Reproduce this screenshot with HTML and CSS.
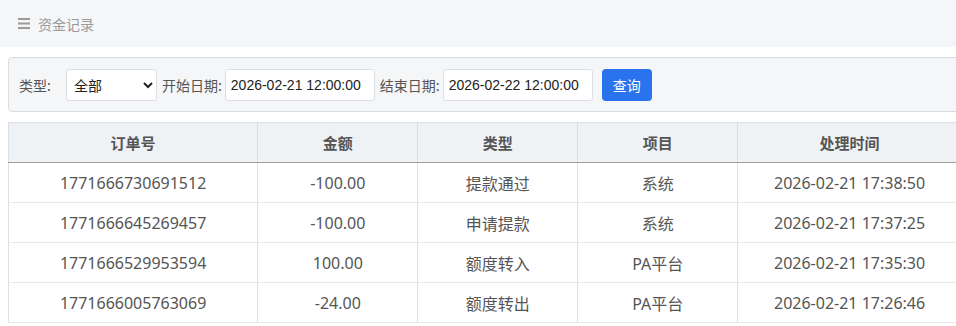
FILE: index.html
```html
<!DOCTYPE html>
<html lang="zh-CN">
<head>
    <meta charset="UTF-8">
    <meta name="viewport" content="width=device-width, initial-scale=1.0">
    <title>资金记录</title>
    <link rel="stylesheet" href="styles.css">
</head>
<body>

    <header class="topbar">
        <span class="menu-icon">
            <svg width="12" height="11" viewBox="0 0 12 11"><rect x="0" y="0" width="12" height="2" fill="#9a9a9a"/><rect x="0" y="4.5" width="12" height="2" fill="#9a9a9a"/><rect x="0" y="9" width="12" height="2" fill="#9a9a9a"/></svg>
        </span>
        <span class="title">资金记录</span>
    </header>

    <main class="content">
        <!-- 筛选条件 -->
        <div class="filter">
            <label for="type" class="label-type">类型:</label>
            <select id="type">
                <option value="">全部</option>
                <option value="1">提款通过</option>
                <option value="2">申请提款</option>
                <option value="3">额度转入</option>
                <option value="4">额度转出</option>
            </select>
            <label for="start">开始日期:</label>
            <input type="text" id="start" value="2026-02-21 12:00:00">
            <label for="end">结束日期:</label>
            <input type="text" id="end" value="2026-02-22 12:00:00">
            <button class="btn-query">查询</button>
        </div>

        <!-- 记录列表 -->
        <table class="records">
            <thead>
                <tr>
                    <th class="col-order">订单号</th>
                    <th class="col-mid">金额</th>
                    <th class="col-mid">类型</th>
                    <th class="col-mid">项目</th>
                    <th class="col-time">处理时间</th>
                </tr>
            </thead>
            <tbody>
                <tr>
                    <td>1771666730691512</td>
                    <td>-100.00</td>
                    <td>提款通过</td>
                    <td>系统</td>
                    <td>2026-02-21 17:38:50</td>
                </tr>
                <tr>
                    <td>1771666645269457</td>
                    <td>-100.00</td>
                    <td>申请提款</td>
                    <td>系统</td>
                    <td>2026-02-21 17:37:25</td>
                </tr>
                <tr>
                    <td>1771666529953594</td>
                    <td>100.00</td>
                    <td>额度转入</td>
                    <td>PA平台</td>
                    <td>2026-02-21 17:35:30</td>
                </tr>
                <tr>
                    <td>1771666005763069</td>
                    <td>-24.00</td>
                    <td>额度转出</td>
                    <td>PA平台</td>
                    <td>2026-02-21 17:26:46</td>
                </tr>
            </tbody>
        </table>
    </main>

</body>
</html>
```

FILE: styles.css
```css
/* 全局 */
body {
    margin: 0;
    padding: 0;
    font-family: "Microsoft YaHei", "Noto Sans CJK SC", "Noto Sans", sans-serif;
    color: #555;
    background-color: #fff;
    overflow: hidden;
}

/* 顶部栏 */
.topbar {
    height: 47px;
    background-color: #f5f6f8;
    display: flex;
    align-items: center;
    padding-left: 18px;
    gap: 8px;
    font-size: 14px;
    color: #9a9a9a;
}

.menu-icon {
    display: flex;
    align-items: center;
}

.content {
    width: 954px;
    margin-left: 8px;
    padding-top: 10px;
}

/* 筛选栏 */
.filter {
    display: flex;
    align-items: center;
    height: 53px;
    padding-left: 10px;
    background-color: #f5f6f8;
    border: 1px solid #d8dbe0;
    border-radius: 4px;
    font-size: 14px;
    color: #555;
}

.filter label {
    white-space: nowrap;
}

.filter .label-type {
    margin-right: 15px;
}

.filter select,
.filter input {
    height: 32px;
    box-sizing: border-box;
    border: 1px solid #dcdfe6;
    border-radius: 3px;
    background-color: #fff;
    font-family: "Liberation Sans", "Noto Sans CJK SC", sans-serif;
    font-size: 14px;
    color: #222;
}

.filter select {
    width: 91px;
    padding-left: 3px;
    margin-right: 5px;
    font-family: "Noto Sans CJK SC", sans-serif;
}

.filter input {
    width: 150px;
    padding: 0 5px;
    margin-left: 3px;
    margin-right: 5px;
}

.btn-query {
    margin-left: 4px;
    width: 50px;
    height: 32px;
    border: none;
    border-radius: 4px;
    background-color: #2a73ee;
    color: #fff;
    font-family: "Noto Sans CJK SC", sans-serif;
    font-size: 14px;
    cursor: pointer;
}

/* 表格 */
.records {
    margin-top: 10px;
    width: 954px;
    border-collapse: collapse;
    border: 1px solid #dcdfe6;
    font-family: "Noto Sans", "Noto Sans CJK SC", sans-serif;
    font-size: 16px;
    color: #555;
}

.records th {
    height: 39px;
    background-color: #eff2f5;
    font-size: 15px;
    font-weight: bold;
    color: #555;
    border-bottom: 1px solid #a39c9c;
    border-left: 1px solid #ecd6d8;
    padding: 0;
}

.records td {
    height: 39px;
    text-align: center;
    border-bottom: 1px solid #e8e8e8;
    border-left: 1px solid #ecd6d8;
    padding: 0;
}

.records th:first-child,
.records td:first-child {
    border-left: none;
}

.col-order {
    width: 249px;
}

.col-mid {
    width: 160px;
}

.col-time {
    width: 224px;
}
```
